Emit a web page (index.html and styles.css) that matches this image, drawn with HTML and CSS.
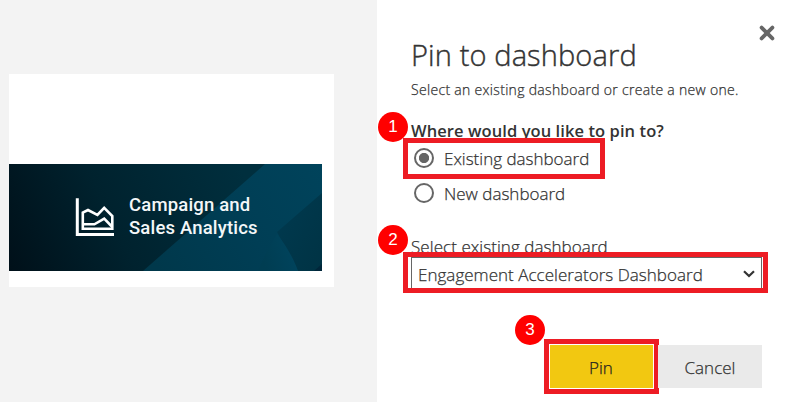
FILE: index.html
```html
<!DOCTYPE html>
<html lang="en">
<head>
<meta charset="utf-8">
<title>Pin to dashboard</title>
<link rel="stylesheet" href="styles.css">
</head>
<body>
<main class="dialog">
  <section class="preview">
    <div class="tile">
      <div class="banner">
        <svg class="banner-bg" viewBox="0 0 313 107" preserveAspectRatio="none" aria-hidden="true">
          <defs>
            <linearGradient id="base" gradientUnits="userSpaceOnUse" x1="0" y1="107" x2="230" y2="0">
              <stop offset="0" stop-color="#001019"/>
              <stop offset="0.45" stop-color="#00222e"/>
              <stop offset="1" stop-color="#002f3e"/>
            </linearGradient>
            <linearGradient id="band" gradientUnits="userSpaceOnUse" x1="150" y1="107" x2="313" y2="0">
              <stop offset="0" stop-color="#00384b"/>
              <stop offset="0.5" stop-color="#003e55"/>
              <stop offset="1" stop-color="#00435b"/>
            </linearGradient>
            <linearGradient id="fold" x1="0" y1="0" x2="1" y2="1">
              <stop offset="0" stop-color="#003a50"/>
              <stop offset="1" stop-color="#003344"/>
            </linearGradient>
            <linearGradient id="wedge" x1="1" y1="0" x2="0" y2="0.3">
              <stop offset="0" stop-color="#00455f"/>
              <stop offset="1" stop-color="#003d52"/>
            </linearGradient>
          </defs>
          <rect width="313" height="107" fill="url(#base)"/>
          <path d="M134 107L256 0h57v107z" fill="url(#band)"/>
          <path d="M313 29L268 68L289 107h24z" fill="url(#fold)"/>
          <path d="M268 70C260 84 254 94 249 107h40C284 93 276 80 268 70z" fill="url(#wedge)"/>
          <path d="M305 107l8-7v7z" fill="#00263a"/>
        </svg>
        <svg class="banner-icon" width="40" height="40" viewBox="0 0 40 40" aria-hidden="true">
          <g fill="none" stroke="#fff">
            <path d="M3.3 1.2v36.2H40" stroke-width="3"/>
            <path d="M8.8 31.8V15.6L14 13L23.4 18L30.2 10.8L38.3 19V31.8z" stroke-width="2.6"/>
            <path d="M8.8 27.3h11.6L30.2 21.7L38.3 30" stroke-width="2.6"/>
          </g>
        </svg>
        <p class="banner-text">Campaign and<br>Sales Analytics</p>
      </div>
    </div>
  </section>
  <section class="panel">
    <svg class="close" width="16" height="16" viewBox="0 0 16 16" aria-label="Close"><path d="M2.6 2.6l10.8 10.8M13.4 2.6L2.6 13.4" stroke="#666" stroke-width="3.8" stroke-linecap="round"/></svg>
    <h1 class="title">Pin to dashboard</h1>
    <p class="subtitle">Select an existing dashboard or create a new one.</p>
    <h2 class="question">Where would you like to pin to?</h2>
    <div class="option option-existing">
      <span class="radio checked"></span><span class="option-text">Existing dashboard</span>
      <i class="mark mark-option"></i><b class="step step-one">1</b>
    </div>
    <div class="option option-new">
      <span class="radio"></span><span class="option-text">New dashboard</span>
    </div>
    <p class="label">Select existing dashboard</p>
    <div class="field">
      <div class="select"><span>Engagement Accelerators Dashboard</span>
        <svg width="12" height="8" viewBox="0 0 12 8" aria-hidden="true"><path d="M1 1.2l5 4.8l5-4.8" fill="none" stroke="#333" stroke-width="2.2"/></svg>
      </div>
      <i class="mark mark-field"></i><b class="step step-two">2</b>
    </div>
    <div class="actions">
      <div class="button primary"><span>Pin</span><i class="mark mark-pin"></i><b class="step step-three">3</b></div>
      <div class="button cancel"><span>Cancel</span></div>
    </div>
  </section>
</main>
</body>
</html>
```
FILE: styles.css
```css
* { box-sizing: border-box; }
body, h1, h2, p { margin: 0; }
body {
  height: 402px;
  overflow: hidden;
  background: #fff;
  color: #333;
  font-family: "Open Sans", "Noto Sans", sans-serif;
  font-weight: 300;
  -webkit-text-stroke: 0.25px currentColor;
  white-space: nowrap;
}
.dialog { display: grid; grid-template-columns: 377px 1fr; height: 402px; }
.preview { background: #f3f3f3; padding: 74px 0 0 9px; }
.tile { width: 325px; height: 213px; padding-top: 90px; background: #fff; }
.banner {
  position: relative;
  display: flex;
  width: 313px;
  height: 107px;
  padding: 33px 0 0 65px;
}
.banner-bg { position: absolute; inset: 0; width: 100%; height: 100%; }
.banner-icon { position: relative; flex: none; }
.banner-text {
  position: relative;
  margin: -3px 0 0 15px;
  color: #f4f7f8;
  font: 500 18.5px/23px Roboto, sans-serif;
  letter-spacing: 0.17px;
  -webkit-text-stroke: 0;
}
.panel { position: relative; padding: 35px 0 0 34px; }
.close { position: absolute; left: 382px; top: 25px; }
.title { height: 40px; font-size: 29px; font-weight: 300; line-height: 40px; letter-spacing: 0.12px; -webkit-text-stroke: 0.4px currentColor; }
.subtitle { margin-top: 5px; font-size: 14px; line-height: 20px; letter-spacing: 0.31px; }
.question { margin-top: 20px; font-size: 16.5px; line-height: 22px; font-weight: 600; letter-spacing: 0.08px; -webkit-text-stroke: 0; }
.option { position: relative; display: flex; align-items: center; gap: 10px; height: 24px; padding-left: 3px; font-size: 17px; line-height: 24px; }
.option-text { padding-top: 2px; }
.option-existing { margin-top: 4px; }
.option-new { margin-top: 11px; }
.radio { width: 20px; height: 20px; border: 2px solid #666; border-radius: 50%; }
.checked { background: radial-gradient(circle, #666 4.7px, transparent 5.5px); }
.label { padding-top: 31px; height: 52px; font-size: 17px; line-height: 22px; letter-spacing: 0.06px; }
.field { position: relative; width: 351px; }
.select {
  display: flex;
  align-items: center;
  justify-content: space-between;
  height: 34px;
  padding: 0 6px;
  border: 1px solid #666;
  font-size: 17px;
  letter-spacing: 0.03px;
}
.actions { display: flex; width: 351px; margin-top: 54px; padding-left: 138px; gap: 5px; }
.button { position: relative; display: flex; align-items: center; justify-content: center; height: 43px; padding-top: 1px; font-size: 17px; }
.primary { width: 104px; background: #f2c811; color: #222; }
.cancel { width: 104px; background: #eaeaea; }
.mark { position: absolute; border: 5px solid #ed1c24; }
.mark-option { left: -8px; top: -8px; width: 202px; height: 41px; }
.mark-field { left: -8px; top: -5px; width: 365px; height: 41px; }
.mark-pin { left: -5px; top: -6px; width: 115px; height: 55px; box-shadow: inset 0 0 0 1px #fff; }
.step {
  position: absolute;
  width: 30px;
  height: 30px;
  border-radius: 50%;
  background: #f00;
  color: #fff;
  font: 400 17px/30px "Liberation Sans", sans-serif;
  -webkit-text-stroke: 0;
  text-align: center;
}
.step-one { left: -33px; top: -34px; }
.step-two { left: -33px; top: -32px; }
.step-three { left: -34px; top: -30px; }
```
